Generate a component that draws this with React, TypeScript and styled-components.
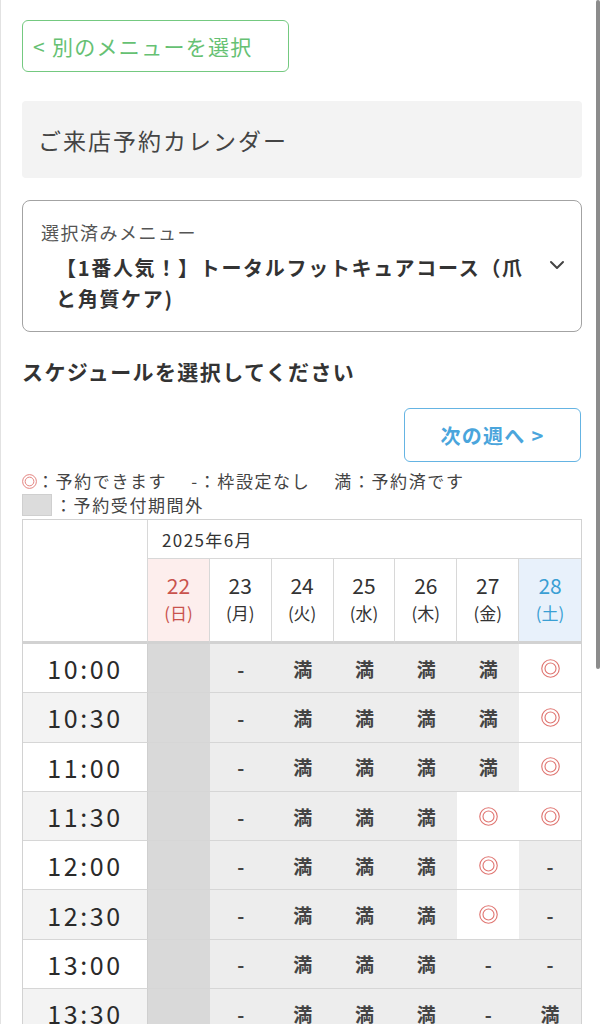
import React from "react";
import styled, { createGlobalStyle } from "styled-components";

const GlobalStyle = createGlobalStyle`
  html, body { margin: 0; padding: 0; overflow: hidden; background: #fff; }
  * { box-sizing: border-box; }
  body {
    font-family: "Noto Sans CJK JP", "Noto Sans", sans-serif;
    color: #333;
  }
`;

const Page = styled.div`
  width: 604px;
  min-height: 1024px;
  border-left: 1px solid #e2e2e2;
  padding: 20px 22px 40px 21px;
  display: flex;
  flex-direction: column;
`;

const ScrollThumb = styled.div`
  position: fixed;
  top: 0;
  right: 4px;
  width: 4px;
  height: 669px;
  border-radius: 2px;
  background: #8c8c8c;
`;

const BackButton = styled.button`
  width: 267px;
  height: 52px;
  border: 1.5px solid #74c980;
  border-radius: 6px;
  background: #fff;
  color: #66c173;
  font-family: inherit;
  font-size: 21px;
  letter-spacing: 1.3px;
  text-align: left;
  padding: 0 0 0 10px;
  display: flex;
  align-items: center;
`;

const TitleBox = styled.div`
  margin-top: 29px;
  height: 77px;
  background: #f3f3f3;
  border-radius: 4px;
  padding-left: 16px;
  display: flex;
  align-items: center;
  font-size: 23px;
  letter-spacing: 2px;
  color: #444;
`;

const MenuBox = styled.div`
  margin-top: 22px;
  height: 132px;
  border: 1px solid #a3a3a3;
  border-radius: 8px;
  padding: 19px 7px 0 18px;
`;

const MenuLabel = styled.div`
  font-size: 18px;
  line-height: 24px;
  letter-spacing: 1.5px;
  color: #555;
`;

const MenuRow = styled.div`
  margin-top: 8px;
  display: flex;
  align-items: flex-start;
`;

const MenuTitle = styled.div`
  flex: 1;
  margin-left: 15px;
  font-size: 20px;
  font-weight: 700;
  line-height: 31px;
  letter-spacing: 1.7px;
  color: #333;
`;

const Chevron = styled.div`
  width: 20px;
  margin-left: 6px;
  margin-right: 7px;
  padding-top: 7px;
  display: flex;
  justify-content: center;
`;

const Heading = styled.h2`
  margin: 24px 0 0;
  font-size: 21px;
  line-height: 30px;
  font-weight: 700;
  letter-spacing: 1.4px;
  color: #333;
`;

const NextRow = styled.div`
  margin-top: 22px;
  display: flex;
  justify-content: flex-end;
  padding-right: 1px;
`;

const NextButton = styled.button`
  width: 177px;
  height: 54px;
  border: 1.5px solid #65b4e3;
  border-radius: 6px;
  background: #fff;
  color: #4aa5dc;
  font-family: inherit;
  font-size: 20px;
  font-weight: 700;
  letter-spacing: 1.3px;
`;

const LegendLine = styled.div<{ $gap?: number }>`
  margin-top: ${(p) => p.$gap ?? 0}px;
  display: flex;
  align-items: center;
  font-size: 17px;
  line-height: 22px;
  letter-spacing: 1.6px;
  color: #444;
  white-space: pre;
`;

const LegendSwatch = styled.span`
  width: 30px;
  height: 22px;
  background: #dcdcdc;
  border: 1px solid #cfcfcf;
  margin-right: 3px;
`;

const Table = styled.div`
  margin-top: 3px;
  width: 560px;
  border: 1px solid #d2d2d2;
  display: grid;
  grid-template-columns: 125px repeat(7, 1fr);
`;

const Corner = styled.div`
  grid-row: span 2;
  border-right: 1px solid #d8d8d8;
  border-bottom: 3px solid #d2d2d2;
  background: #fff;
`;

const MonthCell = styled.div`
  grid-column: span 7;
  height: 39px;
  border-bottom: 1px solid #d8d8d8;
  display: flex;
  align-items: center;
  padding-left: 14px;
  font-size: 17px;
  letter-spacing: 1.4px;
  color: #333;
`;

type DayKind = "sun" | "sat" | "normal";

const DayHead = styled.div<{ $kind: DayKind; $last?: boolean }>`
  height: 85px;
  border-right: ${(p) => (p.$last ? "none" : "1px solid #d8d8d8")};
  border-bottom: 3px solid #d2d2d2;
  background: ${(p) =>
    p.$kind === "sun" ? "#fdeeed" : p.$kind === "sat" ? "#e8f1fb" : "#fff"};
  color: ${(p) =>
    p.$kind === "sun" ? "#c9534d" : p.$kind === "sat" ? "#3a9fd4" : "#333"};
  display: flex;
  flex-direction: column;
  align-items: center;
  justify-content: center;
  padding-bottom: 3px;
`;

const DayNum = styled.span`
  font-size: 21px;
  line-height: 27px;
`;

const DayName = styled.span`
  font-size: 17px;
  line-height: 27px;
`;

const TimeCell = styled.div<{ $alt: boolean }>`
  height: 49.3px;
  border-right: 1px solid #cfcfcf;
  border-bottom: 1px solid #d6d6d6;
  background: ${(p) => (p.$alt ? "#f3f3f3" : "#fff")};
  display: flex;
  align-items: center;
  justify-content: center;
  font-size: 25px;
  font-weight: 400;
  letter-spacing: 2.6px;
  color: #2a2a2a;
`;

type Slot = "x" | "-" | "満" | "o";

const SlotCell = styled.div<{ $slot: Slot }>`
  height: 49.3px;
  border-bottom: 1px solid #d6d6d6;
  background: ${(p) =>
    p.$slot === "x" ? "#d9d9d9" : p.$slot === "o" ? "#fff" : "#ededed"};
  display: flex;
  align-items: center;
  justify-content: center;
  font-size: 19px;
  font-weight: 700;
  color: #444;
`;

const DoubleCircle = ({ size }: { size: number }) => (
  <svg width={size} height={size} viewBox="0 0 20 20" fill="none">
    <circle cx="10" cy="10" r="9.2" stroke="#e07672" strokeWidth="1.2" />
    <circle cx="10" cy="10" r="5.8" stroke="#e07672" strokeWidth="1.2" />
  </svg>
);

const days: { num: number; name: string; kind: DayKind }[] = [
  { num: 22, name: "(日)", kind: "sun" },
  { num: 23, name: "(月)", kind: "normal" },
  { num: 24, name: "(火)", kind: "normal" },
  { num: 25, name: "(水)", kind: "normal" },
  { num: 26, name: "(木)", kind: "normal" },
  { num: 27, name: "(金)", kind: "normal" },
  { num: 28, name: "(土)", kind: "sat" },
];

const rows: { time: string; slots: Slot[] }[] = [
  { time: "10:00", slots: ["x", "-", "満", "満", "満", "満", "o"] },
  { time: "10:30", slots: ["x", "-", "満", "満", "満", "満", "o"] },
  { time: "11:00", slots: ["x", "-", "満", "満", "満", "満", "o"] },
  { time: "11:30", slots: ["x", "-", "満", "満", "満", "o", "o"] },
  { time: "12:00", slots: ["x", "-", "満", "満", "満", "o", "-"] },
  { time: "12:30", slots: ["x", "-", "満", "満", "満", "o", "-"] },
  { time: "13:00", slots: ["x", "-", "満", "満", "満", "-", "-"] },
  { time: "13:30", slots: ["x", "-", "満", "満", "満", "-", "満"] },
  { time: "14:00", slots: ["x", "-", "満", "満", "満", "-", "満"] },
];

export default function App() {
  return (
    <>
      <GlobalStyle />
      <ScrollThumb />
      <Page>
        <BackButton>&lt; 別のメニューを選択</BackButton>
        <TitleBox>ご来店予約カレンダー</TitleBox>
        <MenuBox>
          <MenuLabel>選択済みメニュー</MenuLabel>
          <MenuRow>
            <MenuTitle>【1番人気！】トータルフットキュアコース（爪と角質ケア)</MenuTitle>
            <Chevron>
              <svg width="16" height="12" viewBox="0 0 16 12" fill="none">
                <polyline
                  points="2,3 8,9 14,3"
                  stroke="#444"
                  strokeWidth="2"
                  strokeLinecap="round"
                  strokeLinejoin="round"
                />
              </svg>
            </Chevron>
          </MenuRow>
        </MenuBox>
        <Heading>スケジュールを選択してください</Heading>
        <NextRow>
          <NextButton>次の週へ &gt;</NextButton>
        </NextRow>
        <LegendLine $gap={8}>
          <DoubleCircle size={15} />
          {"：予約できます　 -：枠設定なし　 満：予約済です"}
        </LegendLine>
        <LegendLine $gap={2}>
          <LegendSwatch />
          {"：予約受付期間外"}
        </LegendLine>
        <Table>
          <Corner />
          <MonthCell>2025年6月</MonthCell>
          {days.map((d, i) => (
            <DayHead key={d.num} $kind={d.kind} $last={i === days.length - 1}>
              <DayNum>{d.num}</DayNum>
              <DayName>{d.name}</DayName>
            </DayHead>
          ))}
          {rows.map((r, ri) => (
            <React.Fragment key={r.time}>
              <TimeCell $alt={ri % 2 === 1}>{r.time}</TimeCell>
              {r.slots.map((s, si) => (
                <SlotCell key={si} $slot={s}>
                  {s === "o" ? <DoubleCircle size={19} /> : s === "x" ? "" : s}
                </SlotCell>
              ))}
            </React.Fragment>
          ))}
        </Table>
      </Page>
    </>
  );
}
